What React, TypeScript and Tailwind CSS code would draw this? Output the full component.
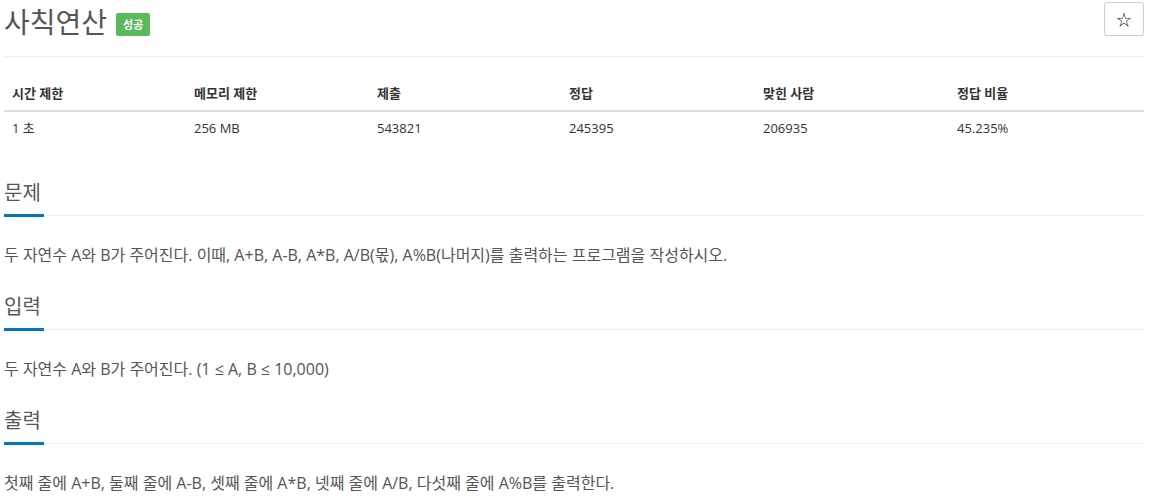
const stats = [
  { label: "시간 제한", value: "1 초", w: "w-[182px]" },
  { label: "메모리 제한", value: "256 MB", w: "w-[183px]" },
  { label: "제출", value: "543821", w: "w-[192px]" },
  { label: "정답", value: "245395", w: "w-[194px]" },
  { label: "맞힌 사람", value: "206935", w: "w-[194px]" },
  { label: "정답 비율", value: "45.235%", w: "flex-1" },
]

const Section = ({ title, first, children }: { title: string; first?: boolean; children: React.ReactNode }) => (
  <section className={first ? "mt-[26px]" : "mt-[19px]"}>
    <div className="relative h-[44px] border-b border-dotted border-[#ddd]">
      <h2 className="text-[20px] leading-[36px] text-[#555] pt-[3px]">{title}</h2>
      <div className="absolute left-0 bottom-[-2px] w-[40px] h-[3px] bg-[#0076c0]" />
    </div>
    <p className="mt-[27px] text-[16px] leading-[24px] text-[#555]">{children}</p>
  </section>
)

export default function App() {
  return (
    <div
      className="w-[1152px] h-[504px] bg-white pl-[4px] pr-[8px] overflow-hidden"
      style={{ fontFamily: '"Open Sans", "Noto Sans CJK KR", sans-serif' }}
    >
      <div className="flex items-start justify-between h-[57px] border-b border-[#eee]">
        <div className="flex items-center h-[44px] gap-[9px]">
          <h1 className="text-[28px] leading-[44px] text-[#555]">사칙연산</h1>
          <span className="mt-[4px] bg-[#5cb85c] text-white text-[11px] font-bold leading-[23px] px-[7px] rounded-[2px]">
            성공
          </span>
        </div>
        <button className="mt-[2px] w-[40px] h-[34px] border border-[#ccc] rounded-[3px] bg-white text-[#222] text-[15px] flex items-center justify-center">
          ☆
        </button>
      </div>

      <div className="mt-[21px]">
        <div className="flex border-b-2 border-[#ddd] h-[34px] items-center">
          {stats.map((s) => (
            <div key={s.label} className={`${s.w} px-[8px] text-[13px] font-bold text-[#333]`}>
              {s.label}
            </div>
          ))}
        </div>
        <div className="flex h-[34px] items-center">
          {stats.map((s) => (
            <div key={s.label} className={`${s.w} px-[8px] text-[13px] text-[#333]`}>
              {s.value}
            </div>
          ))}
        </div>
      </div>

      <Section title="문제" first>
        두 자연수 A와 B가 주어진다. 이때, A+B, A-B, A*B, A/B(몫), A%B(나머지)를 출력하는 프로그램을 작성하시오.
      </Section>
      <Section title="입력">두 자연수 A와 B가 주어진다. (1 ≤ A, B ≤ 10,000)</Section>
      <Section title="출력">첫째 줄에 A+B, 둘째 줄에 A-B, 셋째 줄에 A*B, 넷째 줄에 A/B, 다섯째 줄에 A%B를 출력한다.</Section>
    </div>
  )
}
